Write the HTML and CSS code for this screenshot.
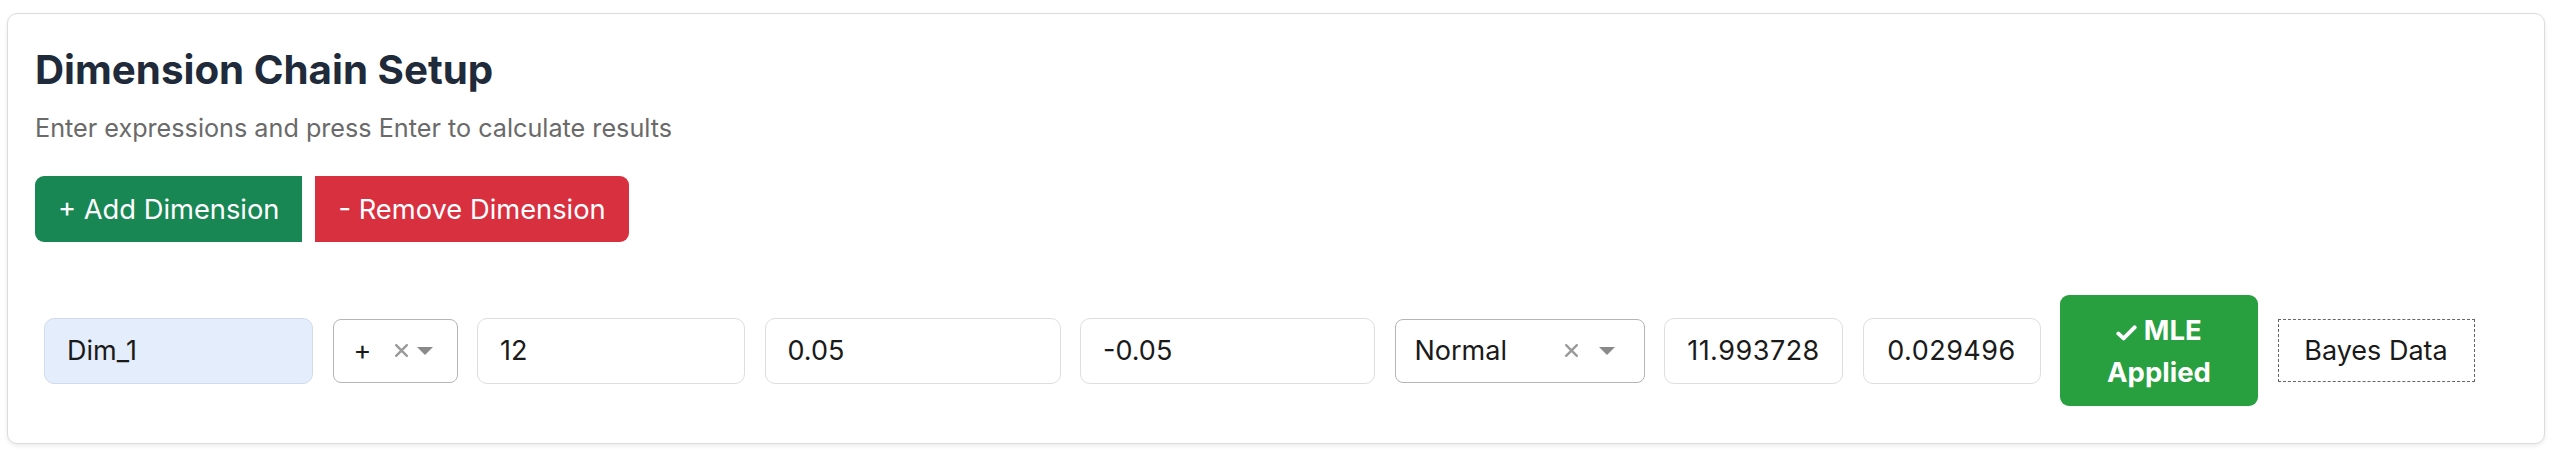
FILE: index.html
```html
<!DOCTYPE html>
<html lang="en">
<head>
<meta charset="utf-8">
<title>Dimension Chain Setup</title>
<link rel="stylesheet" href="styles.css">
</head>
<body>
<section class="card">
  <h2 class="title">Dimension Chain Setup</h2>
  <p class="subtitle">Enter expressions and press Enter to calculate results</p>
  <div class="actions">
    <button class="btn btn-add">+ Add Dimension</button>
    <button class="btn btn-remove">- Remove Dimension</button>
  </div>
  <div class="dim-row">
    <input class="field field-name" type="text" value="Dim_1">
    <div class="select select-op">
      <span class="select-value">+</span>
      <span class="select-clear"><svg viewBox="0 0 14 14" width="15" height="15"><path d="M2 2 L12 12 M12 2 L2 12" stroke="currentColor" stroke-width="2.2" stroke-linecap="round"/></svg></span>
      <span class="select-arrow"><svg viewBox="0 0 16 8" width="16" height="8"><path d="M0 0 H16 L8 8 Z" fill="currentColor"/></svg></span>
    </div>
    <input class="field field-nominal" type="text" value="12">
    <input class="field field-upper" type="text" value="0.05">
    <input class="field field-lower" type="text" value="-0.05">
    <div class="select select-dist">
      <span class="select-value">Normal</span>
      <span class="select-clear"><svg viewBox="0 0 14 14" width="15" height="15"><path d="M2 2 L12 12 M12 2 L2 12" stroke="currentColor" stroke-width="2.2" stroke-linecap="round"/></svg></span>
      <span class="select-arrow"><svg viewBox="0 0 16 8" width="16" height="8"><path d="M0 0 H16 L8 8 Z" fill="currentColor"/></svg></span>
    </div>
    <input class="field field-result field-mean" type="text" value="11.993728" readonly>
    <input class="field field-result field-sd" type="text" value="0.029496" readonly>
    <button class="btn-mle"><svg class="check" viewBox="0 0 21 16" width="21" height="16"><path d="M2.4 8.6 L7.6 13.4 L18.6 2.4" fill="none" stroke="currentColor" stroke-width="4" stroke-linecap="round" stroke-linejoin="round"/></svg> MLE<br>Applied</button>
    <button class="btn-bayes">Bayes Data</button>
  </div>
</section>
</body>
</html>
```
FILE: styles.css
```css
* { box-sizing: border-box; }

body {
  margin: 0;
  padding: 13px 13px 10px 7px;
  background: #ffffff;
  font-family: Inter, "Noto Sans", "Liberation Sans", sans-serif;
  color: #212529;
}

.card {
  border: 1px solid #dcdcdc;
  border-radius: 10px;
  background: #fff;
  box-shadow: 0 2px 4px rgba(0, 0, 0, 0.08);
  padding: 27px 27px 27px 27px;
}

.title {
  margin: 5px 0 0;
  font-size: 40.3px;
  line-height: 47px;
  font-weight: 700;
  color: #1f2a3a;
}

.subtitle {
  margin: 18px 0 0;
  font-size: 25.2px;
  line-height: 34px;
  color: #6a6a6a;
}

.actions {
  display: flex;
  gap: 13px;
  margin-top: 31px;
}

.btn {
  border: none;
  font-family: inherit;
  font-size: 27.3px;
  line-height: 39px;
  padding: 13.5px 23px;
  color: #fff;
  cursor: pointer;
}

.btn-add {
  background: #198754;
  border-radius: 9px 0 0 9px;
}

.btn-remove {
  background: #d9303f;
  border-radius: 0 9px 9px 0;
}

.dim-row {
  display: flex;
  align-items: center;
  gap: 19.5px;
  margin-top: 53px;
  margin-bottom: 10px;
  padding-left: 9px;
}

.field {
  height: 66px;
  border: 1px solid #dedede;
  border-radius: 10px;
  background: #fff;
  font-family: inherit;
  font-size: 27px;
  color: #1a1a1a;
  padding: 0 22px;
  outline: none;
}

.field-name {
  width: 269px;
  background: #e4edfc;
  border-color: #d2dbe9;
}

.field-nominal { width: 268px; }
.field-upper { width: 296px; }
.field-lower { width: 295px; }

.field-result {
  text-align: center;
  padding: 0 6px;
  letter-spacing: 0.5px;
}
.field-mean { width: 179px; }
.field-sd { width: 178px; }

.select {
  height: 64px;
  border: 1px solid #b5b5b5;
  border-radius: 8px;
  background: #fff;
  display: flex;
  align-items: center;
  font-size: 27px;
  color: #1a1a1a;
}

.select-value { flex: 1; }

.select-clear {
  display: flex;
  color: #9a9a9a;
}

.select-arrow {
  display: flex;
  color: #8a8a8a;
}

.select-op {
  width: 125px;
  padding: 0 24px 0 20px;
}
.select-op .select-arrow { margin-left: 8px; }

.select-dist {
  width: 250px;
  padding: 0 29px 0 19px;
}
.select-dist .select-arrow { margin-left: 20px; }

.btn-mle {
  width: 198px;
  height: 111px;
  border: none;
  border-radius: 9px;
  background: #28a040;
  color: #fff;
  font-family: inherit;
  font-size: 27.5px;
  font-weight: 700;
  line-height: 42px;
  padding: 0 10px;
}

.check {
  vertical-align: -1px;
}

.btn-bayes {
  width: 197px;
  height: 63px;
  border: 1px dashed #666;
  border-radius: 0;
  background: #fff;
  color: #1a1a1a;
  font-family: inherit;
  font-size: 27px;
  padding: 0 8px;
}
```
